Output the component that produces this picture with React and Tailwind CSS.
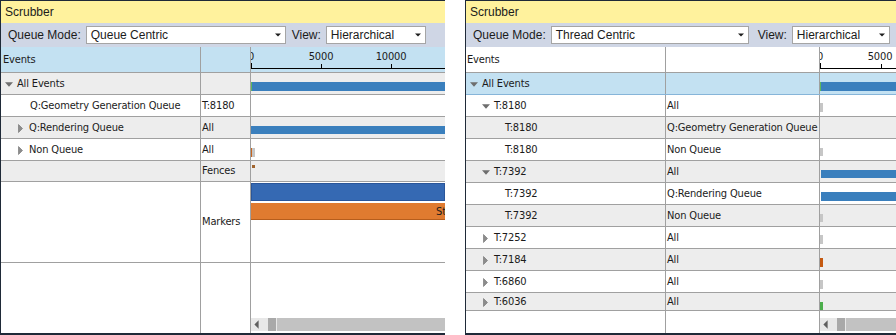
import React from "react";

const G = "font-['DejaVu_Sans_Condensed','Liberation_Sans',Arial,sans-serif] text-[11px] tracking-[-0.15px] text-[#1b1b1b]";
const U = "font-['Liberation_Sans',Arial,sans-serif] text-[12px] tracking-normal text-[#1b1b1b]";

function TriDown() {
  return (
    <svg width="8" height="5" viewBox="0 0 8 5" className="block">
      <path d="M0 0.3H8L4 4.8Z" fill="#6e6e6e" />
    </svg>
  );
}

function TriRight() {
  return (
    <svg width="5" height="9" viewBox="0 0 5 9" className="block">
      <path d="M0.5 0.5L4.5 4.5L0.5 8.5Z" fill="#8c8c8c" stroke="#6f6f6f" strokeWidth="0.6" strokeLinejoin="round" />
    </svg>
  );
}

function Combo({ w, text }) {
  return (
    <div className={`${w} h-[18px] shrink-0 bg-white border border-[#a5a5a5] flex items-center justify-between pl-[4px] pr-[4px]`}>
      <span className="leading-none whitespace-nowrap">{text}</span>
      <svg width="6" height="4" viewBox="0 0 6 4" className="block">
        <path d="M0 0.5H6L3 3.5Z" fill="#1e1e1e" />
      </svg>
    </div>
  );
}

function Toolbar({ mode, w1, gap1, w2 }) {
  return (
    <div className={`h-[24px] shrink-0 bg-[#cfd6e5] flex items-center pl-[7px] whitespace-nowrap ${U}`}>
      <span className="leading-none">Queue Mode:</span>
      <div className="w-[5px] shrink-0" />
      <Combo w={w1} text={mode} />
      <div className={`${gap1} shrink-0`} />
      <span className="leading-none">View:</span>
      <div className="w-[5px] shrink-0" />
      <Combo w={w2} text="Hierarchical" />
    </div>
  );
}

function Row({ h = "h-[22px]", bg = "bg-white", line = "border-[#a0a0a0]", c2w, tree, col2, tl }) {
  return (
    <div className={`${h} ${bg} shrink-0 flex border-b ${line}`}>
      <div className="w-[200px] shrink-0 border-r border-[#a0a0a0] flex items-center pt-px overflow-hidden whitespace-nowrap">
        {tree}
      </div>
      <div className={`${c2w} shrink-0 border-r border-[#a0a0a0] flex items-center pt-px pl-px overflow-hidden whitespace-nowrap`}>
        {col2}
      </div>
      <div className="flex-1 min-w-0 overflow-hidden">{tl}</div>
    </div>
  );
}

function L0({ text }) {
  return (
    <div className="flex items-center pl-[4px]">
      <span className="w-[12px] shrink-0">
        <TriDown />
      </span>
      <span>{text}</span>
    </div>
  );
}

function L1Down({ text }) {
  return (
    <div className="flex items-center pl-[16px]">
      <span className="w-[12px] shrink-0">
        <TriDown />
      </span>
      <span>{text}</span>
    </div>
  );
}

function L1Right({ text }) {
  return (
    <div className="flex items-center pl-[17px]">
      <span className="w-[11px] shrink-0">
        <TriRight />
      </span>
      <span>{text}</span>
    </div>
  );
}

function L1Leaf({ text }) {
  return <div className="pl-[29px]">{text}</div>;
}

function L2Leaf({ text }) {
  return <div className="pl-[39px]">{text}</div>;
}

function AllBar() {
  return (
    <div className="mt-[9px] h-[9px] flex">
      <div className="w-px bg-[#5cb85c]" />
      <div className="flex-1 bg-[#3a7fbd]" />
    </div>
  );
}

function Scrollbar() {
  return (
    <div className="h-[13px] bg-[#e8e8e8] flex">
      <div className="w-[17px] shrink-0 h-full flex items-center pl-[3px]">
        <svg width="5" height="9" viewBox="0 0 5 9" className="block">
          <path d="M4.6 0.3V8.7L0.4 4.5Z" fill="#5f5f5f" />
        </svg>
      </div>
      <div className="w-[8px] shrink-0 h-full bg-[#a9a9a9]" />
      <div className="w-px shrink-0" />
      <div className="flex-1 h-full bg-[#c2c2c2]" />
    </div>
  );
}

function Filler({ c2w }) {
  return (
    <div className="flex-1 flex bg-white">
      <div className="w-[200px] shrink-0 border-r border-[#a0a0a0]" />
      <div className={`${c2w} shrink-0 border-r border-[#a0a0a0]`} />
      <div className="flex-1 min-w-0 overflow-hidden flex flex-col justify-end pb-[2px]">
        <Scrollbar />
      </div>
    </div>
  );
}

function Title() {
  return (
    <div className={`h-[22px] shrink-0 bg-[#fff29d] flex items-center pl-[4px] ${U}`}>
      <span className="leading-none">Scrubber</span>
    </div>
  );
}

function LeftPanel() {
  const c2w = "w-[50px]";
  return (
    <div className={`w-[445px] h-[335px] shrink-0 flex flex-col bg-white border-l border-t border-b-2 border-[#1f2a38] overflow-hidden ${G}`}>
      <Title />
      <Toolbar mode="Queue Centric" w1="w-[200px]" gap1="w-[6px]" w2="w-[100px]" />
      <div className="h-[26px] shrink-0 bg-[#c3e1f2] flex border-b border-[#a0a0a0]">
        <div className="w-[200px] shrink-0 border-r border-[#a0a0a0] flex items-center pt-[2px] pl-[2px]">Events</div>
        <div className={`${c2w} shrink-0 border-r border-[#a0a0a0]`} />
        <div className="flex-1 min-w-0 overflow-hidden relative">
          <span className="absolute left-0 top-[3px] -translate-x-1/2 leading-[13px]">0</span>
          <span className="absolute left-[70px] top-[3px] -translate-x-1/2 leading-[13px]">5000</span>
          <span className="absolute left-[140px] top-[3px] -translate-x-1/2 leading-[13px]">10000</span>
          <div className="absolute left-0 top-[16px] w-px h-[6px] bg-black" />
          <div className="absolute left-[70px] top-[17px] w-px h-[5px] bg-black" />
          <div className="absolute left-[140px] top-[17px] w-px h-[5px] bg-black" />
          <div className="absolute left-0 right-0 top-[21px] h-px bg-black" />
        </div>
      </div>
      <Row bg="bg-[#ededed]" c2w={c2w} tree={<L0 text="All Events" />} tl={<AllBar />} />
      <Row c2w={c2w} tree={<L1Leaf text="Q:Geometry Generation Queue" />} col2="T:8180" />
      <Row
        bg="bg-[#ededed]"
        c2w={c2w}
        tree={<L1Right text="Q:Rendering Queue" />}
        col2="All"
        tl={<div className="mt-[9px] h-[8px] bg-[#3a7fbd]" />}
      />
      <Row
        c2w={c2w}
        tree={<L1Right text="Non Queue" />}
        col2="All"
        tl={
          <div className="mt-[9px] h-[9px] flex">
            <div className="w-px bg-[#c8661e]" />
            <div className="w-[3px] bg-[#c6c6c6]" />
          </div>
        }
      />
      <Row
        h="h-[21px]"
        bg="bg-[#ededed]"
        c2w={c2w}
        tree={null}
        col2="Fences"
        tl={<div className="mt-[4px] ml-px w-[3px] h-[3px] bg-[#a0642e]" />}
      />
      <Row
        h="h-[81px]"
        c2w={c2w}
        tree={null}
        col2="Markers"
        tl={
          <div className="pt-px flex flex-col gap-[2px]">
            <div className="h-[18px] bg-[#3569b3] border border-[#2a569a]" />
            <div className="h-[17px] bg-[#e07b30] border-b border-[#b65d1c] flex items-center pl-[185px] whitespace-nowrap leading-none">
              Start
            </div>
          </div>
        }
      />
      <Filler c2w={c2w} />
    </div>
  );
}

function Small({ mt = "mt-[9px]", h = "h-[9px]", color = "bg-[#c6c6c6]" }) {
  return <div className={`${mt} ${h} w-[3px] ${color}`} />;
}

function RightPanel() {
  const c2w = "w-[154px]";
  return (
    <div className={`flex-1 min-w-0 h-[335px] flex flex-col bg-white border-l border-t border-b-2 border-[#1f2a38] overflow-hidden ${G}`}>
      <Title />
      <Toolbar mode="Thread Centric" w1="w-[198px]" gap1="w-[9px]" w2="w-[98px]" />
      <div className="h-[26px] shrink-0 bg-white flex border-b border-[#a0a0a0]">
        <div className="w-[200px] shrink-0 border-r border-[#a0a0a0] flex items-center pt-[2px] pl-[1px]">Events</div>
        <div className={`${c2w} shrink-0 border-r border-[#a0a0a0]`} />
        <div className="flex-1 min-w-0 overflow-hidden relative">
          <span className="absolute left-0 top-[3px] -translate-x-1/2 leading-[13px]">0</span>
          <span className="absolute left-[60px] top-[3px] -translate-x-1/2 leading-[13px]">5000</span>
          <div className="absolute left-0 top-[16px] w-px h-[6px] bg-black" />
          <div className="absolute left-[61px] top-[17px] w-px h-[5px] bg-black" />
          <div className="absolute left-0 right-0 top-[21px] h-px bg-black" />
        </div>
      </div>
      <Row bg="bg-[#c3e1f2]" line="border-[#86b5d9]" c2w={c2w} tree={<L0 text="All Events" />} tl={<AllBar />} />
      <Row c2w={c2w} tree={<L1Down text="T:8180" />} col2="All" tl={<Small mt="mt-[8px]" />} />
      <Row bg="bg-[#ededed]" c2w={c2w} tree={<L2Leaf text="T:8180" />} col2="Q:Geometry Generation Queue" />
      <Row c2w={c2w} tree={<L2Leaf text="T:8180" />} col2="Non Queue" tl={<Small h="h-[8px]" />} />
      <Row
        bg="bg-[#ededed]"
        c2w={c2w}
        tree={<L1Down text="T:7392" />}
        col2="All"
        tl={<div className="mt-[9px] ml-px h-[8px] bg-[#3a7fbd]" />}
      />
      <Row
        c2w={c2w}
        tree={<L2Leaf text="T:7392" />}
        col2="Q:Rendering Queue"
        tl={<div className="mt-[9px] ml-px h-[9px] bg-[#3a7fbd]" />}
      />
      <Row bg="bg-[#ededed]" c2w={c2w} tree={<L2Leaf text="T:7392" />} col2="Non Queue" tl={<Small h="h-[8px]" />} />
      <Row c2w={c2w} tree={<L1Right text="T:7252" />} col2="All" tl={<Small mt="mt-[8px]" />} />
      <Row bg="bg-[#ededed]" c2w={c2w} tree={<L1Right text="T:7184" />} col2="All" tl={<Small color="bg-[#c55a11]" />} />
      <Row c2w={c2w} tree={<L1Right text="T:6860" />} col2="All" tl={<Small />} />
      <Row
        h="h-[18px]"
        bg="bg-[#ededed]"
        c2w={c2w}
        tree={<L1Right text="T:6036" />}
        col2="All"
        tl={<Small h="h-[8px]" color="bg-[#4cae4c]" />}
      />
      <Filler c2w={c2w} />
    </div>
  );
}

export default function App() {
  return (
    <div className="w-[896px] h-[335px] bg-white flex overflow-hidden">
      <LeftPanel />
      <div className="w-[20px] shrink-0" />
      <RightPanel />
    </div>
  );
}
